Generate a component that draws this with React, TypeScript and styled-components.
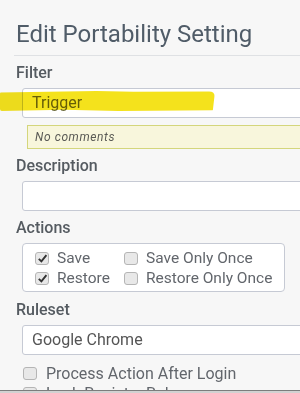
import styled, { createGlobalStyle } from 'styled-components';

const GlobalStyle = createGlobalStyle`
  html, body {
    margin: 0;
    padding: 0;
    background: #d2d2d2;
  }
  body {
    font-family: Roboto, 'Liberation Sans', sans-serif;
    color: #555a60;
  }
`;

type CheckProps = { checked?: boolean };

function Check({ checked }: CheckProps) {
  return (
    <Box>
      {checked && (
        <svg width='11' height='11' viewBox='0 0 11 11'>
          <path d='M1.8 5.8 L4.4 8.4 L9.4 2.2' fill='none' stroke='#333' strokeWidth='1.9' />
        </svg>
      )}
    </Box>
  );
}

export default function App() {
  return (
    <>
      <GlobalStyle />
      <Viewport>
        <Header>
          <Title>Edit Portability Setting</Title>
        </Header>
        <Page>
          <Label>Filter</Label>
          <FieldWrap>
            <Highlight />
            <Input>Trigger</Input>
          </FieldWrap>
          <Comments>No comments</Comments>

          <Label>Description</Label>
          <Input />

          <Label $gap={7}>Actions</Label>
          <ActionBox>
            <CheckItem>
              <Check checked />
              Save
            </CheckItem>
            <CheckItem>
              <Check />
              Save Only Once
            </CheckItem>
            <CheckItem>
              <Check checked />
              Restore
            </CheckItem>
            <CheckItem>
              <Check />
              Restore Only Once
            </CheckItem>
          </ActionBox>

          <Label $gap={8}>Ruleset</Label>
          <Input $select>Google Chrome</Input>

          <OptionList>
            <Option>
              <Check />
              Process Action After Login
            </Option>
            <Option>
              <Check />
              Lock Registry Rules
            </Option>
          </OptionList>
        </Page>
      </Viewport>
    </>
  );
}

const Viewport = styled.div`
  width: 300px;
  height: 390px;
  overflow: hidden;
  background: #f7f7f7;
  border-bottom: 1px solid #7d7d7d;
`;

const Header = styled.div`
  margin-left: 14px;
  width: 330px;
  padding: 20px 0 7px 2px;
  border-bottom: 1px solid #dfe1e4;
`;

const Title = styled.h1`
  margin: 0;
  font-size: 24px;
  font-weight: 400;
  line-height: normal;
  color: #505c68;
`;

const Page = styled.div`
  padding-left: 16px;
  width: 330px;
`;

const Label = styled.div<{ $gap?: number }>`
  font-size: 16px;
  font-weight: 500;
  line-height: normal;
  color: #555b61;
  margin-top: ${p => p.$gap ?? 7}px;
  margin-bottom: 6px;
`;

const FieldWrap = styled.div`
  position: relative;
`;

const Highlight = styled.span`
  position: absolute;
  left: -16px;
  top: 3px;
  width: 215px;
  height: 20px;
  background: #f4e21c;
  mix-blend-mode: multiply;
  border-radius: 3px 6px 4px 2px;
  clip-path: polygon(0 8%, 45% 0, 62% 4%, 100% 2%, 99% 96%, 55% 100%, 30% 94%, 0 100%);
  z-index: 1;
`;

const Input = styled.div<{ $select?: boolean }>`
  margin-left: 6px;
  height: 28px;
  box-sizing: content-box;
  background: #fff;
  border: 1px solid #c6cad4;
  border-radius: 3px;
  padding-left: 9px;
  font-size: 16px;
  line-height: 28px;
  color: ${p => (p.$select ? '#555' : '#6b6a3c')};
`;

const Comments = styled.div`
  margin: 7px 0 4px 11px;
  height: 22px;
  background: #f8f6dc;
  border: 1.5px solid #d4d67c;
  border-right: none;
  padding-left: 7px;
  font-size: 12px;
  font-style: italic;
  line-height: 22px;
  color: #5a5a55;
  letter-spacing: 0.6px;
`;

const ActionBox = styled.div`
  margin-left: 6px;
  width: 249px;
  display: grid;
  grid-template-columns: 89px auto;
  padding: 4px 0 3px 12px;
  background: #fff;
  border: 1px solid #c6cad4;
  border-radius: 4px;
`;

const CheckItem = styled.label`
  display: flex;
  align-items: center;
  gap: 8px;
  height: 20px;
  font-size: 15.5px;
  color: #62666c;
`;

const Box = styled.span`
  width: 14px;
  height: 13px;
  box-sizing: border-box;
  border: 1px solid #b5b5b5;
  border-radius: 3px;
  background: #e8e8e8;
  display: inline-flex;
  align-items: center;
  justify-content: center;
  flex-shrink: 0;
`;

const OptionList = styled.div`
  margin-top: 8px;
  margin-left: 7px;
  display: flex;
  flex-direction: column;
`;

const Option = styled(CheckItem)`
  font-size: 16px;
  gap: 9px;
`;
